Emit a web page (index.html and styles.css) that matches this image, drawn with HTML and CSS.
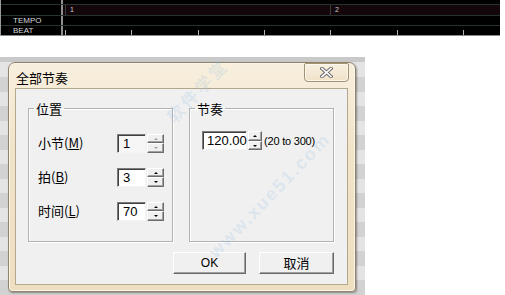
FILE: index.html
```html
<!DOCTYPE html>
<html lang="zh-CN">
<head>
<meta charset="utf-8">
<title>全部节奏</title>
<link rel="stylesheet" href="styles.css">
</head>
<body>
<div class="timeline">
  <div class="trow r0"><div class="tlabel"></div><div class="tcell"></div></div>
  <div class="trow r1"><div class="tlabel"></div><div class="tcell measures"><span class="measure">1</span><span class="measure">2</span></div></div>
  <div class="trow r2"><div class="tlabel">TEMPO</div><div class="tcell"></div></div>
  <div class="trow r3"><div class="tlabel">BEAT</div><div class="tcell ticks"></div></div>
</div>
<div class="desk">
  <div class="dialog">
    <div class="titlebar">
      <span class="title">全部节奏</span>
      <button class="close" type="button" aria-label="关闭">
        <svg width="13" height="11" viewBox="0 0 13 11"><path d="M2 1.5 L11 9.5 M11 1.5 L2 9.5" stroke="#6d6d6d" stroke-width="3.6" stroke-linecap="square"/><path d="M2 1.5 L11 9.5 M11 1.5 L2 9.5" stroke="#ffffff" stroke-width="1.6" stroke-linecap="square"/></svg>
      </button>
    </div>
    <div class="client">
      <div class="groups">
        <fieldset class="group">
          <legend>位置</legend>
          <div class="fields">
            <span class="lbl">小节(<u>M</u>)</span>
            <div class="spinbox disabled"><span class="edit">1</span><span class="spin"><i class="up"></i><i class="down"></i></span></div>
            <span class="lbl">拍(<u>B</u>)</span>
            <div class="spinbox"><span class="edit">3</span><span class="spin"><i class="up"></i><i class="down"></i></span></div>
            <span class="lbl">时间(<u>L</u>)</span>
            <div class="spinbox"><span class="edit">70</span><span class="spin"><i class="up"></i><i class="down"></i></span></div>
          </div>
        </fieldset>
        <fieldset class="group">
          <legend>节奏</legend>
          <div class="tempo">
            <div class="spinbox wide"><span class="edit">120.00</span><span class="spin"><i class="up"></i><i class="down"></i></span></div>
            <span class="range">(20 to 300)</span>
          </div>
        </fieldset>
      </div>
      <div class="buttons">
        <button type="button" class="btn ok">OK</button>
        <button type="button" class="btn cancel">取消</button>
      </div>
    </div>
  </div>
</div>
<div class="watermark cn">软件学堂</div>
<div class="watermark en">www.xue51.com</div>
</body>
</html>
```

FILE: styles.css
```css
html, body {
  margin: 0;
  padding: 0;
}
body {
  width: 505px;
  height: 295px;
  overflow: hidden;
  background: #ffffff;
  position: relative;
  font-family: "Noto Sans CJK SC", "Liberation Sans", sans-serif;
}

/* ---------- timeline ---------- */
.timeline {
  width: 500px;
  height: 36px;
  background: #000;
  display: flex;
  flex-direction: column;
  border-left: 1px solid #9a9a9a;
  box-sizing: border-box;
  overflow: hidden;
}
.trow {
  display: flex;
  border-bottom: 1px solid #27332f;
}
.trow:last-child { border-bottom: 1px solid #8a8a8a; }
.r0 { height: 4px; }
.r1 { height: 10px; }
.r2 { height: 9px; }
.r3 { height: 9px; }
.tlabel {
  width: 62px;
  flex: none;
  border-right: 2px solid #8f8f8f;
  box-sizing: border-box;
  padding-left: 12px;
  font-family: "Liberation Sans", Arial, sans-serif;
  font-size: 8px;
  line-height: 9px;
  color: #d6d6d6;
}
.tcell { flex: 1; min-width: 0; }
.r1 .tcell { background: #14070b; }
.measures {
  display: flex;
  padding-left: 2px;
  overflow: hidden;
}
.measure {
  width: 265px;
  flex: none;
  box-sizing: border-box;
  border-left: 1px solid #3a3a3a;
  padding-left: 4px;
  font-family: "Liberation Sans", Arial, sans-serif;
  font-size: 7px;
  line-height: 10px;
  color: #d0d0d0;
}
.measure:last-child { flex: 1 1 auto; width: auto; }
.ticks {
  background: repeating-linear-gradient(to right, transparent 0 2px, #b0b0b0 2px 3px, transparent 3px 66.3px);
  background-size: 100% 5px;
  background-repeat: no-repeat;
  background-position: 0 100%;
}

/* ---------- desktop behind dialog ---------- */
.desk {
  margin-top: 21px;
  width: 365px;
  height: 238px;
  box-sizing: border-box;
  padding: 5px 9px 0 8px;
  background:
    linear-gradient(#c9c9c9 0 5px, transparent 5px),
    repeating-linear-gradient(to bottom, #e4e4e4 0 14px, #d2d2d2 14px 29px);
  background-position: 0 0, 0 6px;
}

/* ---------- dialog ---------- */
.dialog {
  width: 348px;
  height: 230px;
  box-sizing: border-box;
  border: 1px solid #8f8268;
  border-radius: 7px 7px 4px 4px;
  background: linear-gradient(to bottom, #f8efde, #f1e3c7 40%, #efdfc1);
  box-shadow: 1px 1px 2px rgba(0, 0, 0, 0.35), inset 0 0 0 1px #fbf6ec;
  padding: 0 7px 6px 6px;
  display: flex;
  flex-direction: column;
}
.titlebar {
  height: 25px;
  flex: none;
  display: flex;
  justify-content: space-between;
  align-items: flex-start;
}
.title {
  padding: 7px 0 0 1px;
  font-size: 13px;
  line-height: 16px;
  color: #000;
}
.close {
  width: 45px;
  height: 19px;
  margin: 0 -1px 0 0;
  padding: 0;
  border: 1px solid #a39174;
  border-radius: 2px 2px 4px 4px;
  background: linear-gradient(to bottom, #f8f0e0, #efe2c8);
  box-shadow: inset 0 0 0 1px #fcf8f0;
  display: flex;
  align-items: center;
  justify-content: center;
}
.client {
  flex: 1;
  background: #f0f0f0;
  border: 1px solid #b3a78f;
  padding: 0 13px 0 12px;
  display: flex;
  flex-direction: column;
}
.groups {
  display: flex;
  gap: 16px;
  margin-top: 12px;
}
.group {
  width: 145px;
  height: 141px;
  box-sizing: border-box;
  margin: 0;
  padding: 0;
  border: 1px solid #b2b2b2;
  box-shadow: inset 1px 1px 0 #ffffff, 1px 1px 0 #ffffff;
  min-width: 0;
}
.group legend {
  margin-left: 5px;
  padding: 0 2px;
  font-size: 13px;
  line-height: 15px;
  color: #000;
}
.fields {
  display: grid;
  grid-template-columns: 79px auto;
  row-gap: 14px;
  align-items: center;
  padding: 17px 0 0 9px;
}
.lbl {
  font-size: 13px;
  line-height: 20px;
  color: #000;
}
.lbl u { text-decoration: underline; text-underline-offset: 1px; }

.spinbox {
  display: flex;
  height: 19px;
  width: 47px;
  gap: 1px;
}
.edit {
  width: 29px;
  box-sizing: border-box;
  background: #fff;
  border: 1px solid;
  border-color: #7b7b7b #f4f4f4 #f4f4f4 #7b7b7b;
  box-shadow: inset 1px 1px 0 #404040;
  padding: 0 0 0 5px;
  font-family: "Liberation Sans", Arial, sans-serif;
  font-size: 13px;
  line-height: 17px;
  color: #000;
}
.disabled .edit { background: #f6f6f6; }
.spin {
  width: 17px;
  display: flex;
  flex-direction: column;
}
.spin i {
  flex: 1;
  box-sizing: border-box;
  background: #f0f0f0;
  border: 1px solid;
  border-color: #fff #6c6c6c #6c6c6c #fff;
  box-shadow: inset -1px -1px 0 #a0a0a0;
  position: relative;
}
.spin i::after {
  content: "";
  position: absolute;
  left: 6px;
  width: 0;
  height: 0;
  border-left: 2px solid transparent;
  border-right: 2px solid transparent;
}
.spin .up::after { top: 3px; border-bottom: 2px solid #000; }
.spin .down::after { top: 3px; border-top: 2px solid #000; }
.disabled .spin .up::after { border-bottom-color: #a0a0a0; }
.disabled .spin .down::after { border-top-color: #a0a0a0; }

.tempo {
  display: flex;
  align-items: center;
  gap: 2px;
  padding: 15px 0 0 12px;
}
.spinbox.wide { width: 60px; }
.spinbox.wide .edit { width: 45px; padding-left: 4px; }
.spinbox.wide .spin { width: 14px; }
.spinbox.wide .spin i::after { left: 4px; }
.range {
  font-family: "Liberation Sans", Arial, sans-serif;
  font-size: 11px;
  color: #000;
  letter-spacing: -0.2px;
}

.buttons {
  display: flex;
  justify-content: flex-end;
  gap: 13px;
  margin-top: 10px;
}
.btn {
  height: 22px;
  box-sizing: border-box;
  margin: 0;
  padding: 0;
  background: #f0f0f0;
  border: 1px solid;
  border-color: #ffffff #696969 #696969 #ffffff;
  box-shadow: inset -1px -1px 0 #a0a0a0;
  font-size: 13px;
  color: #000;
  font-family: "Noto Sans CJK SC", "Liberation Sans", sans-serif;
  line-height: 18px;
}
.btn.ok { width: 73px; font-family: "Liberation Sans", Arial, sans-serif; font-size: 12px; }
.btn.cancel { width: 75px; }

/* ---------- watermark overlay ---------- */
.watermark {
  position: absolute;
  color: rgba(150, 190, 228, 0.22);
  font-family: "Liberation Sans", Arial, sans-serif;
  font-weight: bold;
  transform-origin: 0 0;
  transform: rotate(-46deg);
  white-space: nowrap;
  pointer-events: none;
}
.watermark.cn {
  left: 160px;
  top: 110px;
  font-family: "Noto Sans CJK SC", sans-serif;
  font-size: 17px;
  letter-spacing: 3px;
}
.watermark.en {
  left: 205px;
  top: 248px;
  font-size: 18px;
  letter-spacing: 2px;
}
```
